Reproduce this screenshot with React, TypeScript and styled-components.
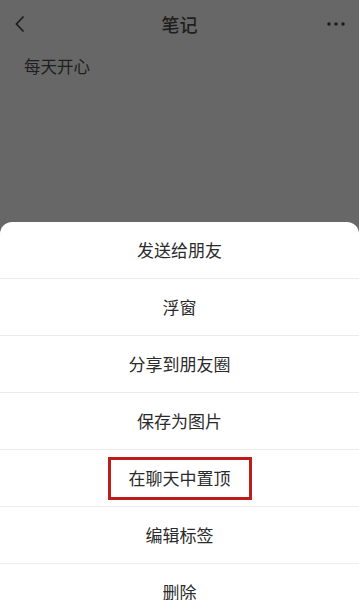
import React from "react";
import styled, { createGlobalStyle } from "styled-components";

const GlobalStyle = createGlobalStyle`
  html, body {
    margin: 0;
    padding: 0;
    background: #676767;
  }
  body {
    font-family: "Noto Sans CJK SC", "Noto Sans", sans-serif;
  }
`;

const Screen = styled.div`
  width: 359px;
  height: 600px;
  overflow: hidden;
  display: flex;
  flex-direction: column;
  background: #676767;
`;

const Backdrop = styled.div`
  height: 222px;
  flex-shrink: 0;
  display: flex;
  flex-direction: column;
`;

const TopBar = styled.div`
  height: 48px;
  display: grid;
  grid-template-columns: 48px 1fr 48px;
  align-items: center;
`;

const IconBox = styled.div<{ $align?: string }>`
  display: flex;
  justify-content: ${(p) => p.$align || "flex-start"};
  align-items: center;
  padding: 0 14px;
`;

const Title = styled.div`
  text-align: center;
  font-size: 18px;
  font-weight: 500;
  color: #1f1f1f;
`;

const NoteText = styled.div`
  padding: 6px 24px 0;
  font-size: 16.5px;
  color: #1f1f1f;
`;

const Sheet = styled.div`
  background: #fff;
  border-radius: 12px 12px 0 0;
  display: flex;
  flex-direction: column;
`;

const Row = styled.div`
  height: 56px;
  display: flex;
  align-items: center;
  justify-content: center;
  border-bottom: 1px solid #ececec;
  &:last-child {
    border-bottom: none;
  }
`;

const Label = styled.span<{ $marked?: boolean }>`
  font-size: 17px;
  line-height: 24px;
  color: #2b2b2b;
  padding: ${(p) => (p.$marked ? "6px 18px 7px" : "0")};
  border: ${(p) => (p.$marked ? "3px solid #bd1d1a" : "none")};
`;

const items = [
  "发送给朋友",
  "浮窗",
  "分享到朋友圈",
  "保存为图片",
  "在聊天中置顶",
  "编辑标签",
  "删除",
];

const App = () => {
  return (
    <>
      <GlobalStyle />
      <Screen>
        <Backdrop>
          <TopBar>
            <IconBox>
              <svg width="12" height="18" viewBox="0 0 12 18">
                <path
                  d="M9.5 1.5 L2.5 9 L9.5 16.5"
                  fill="none"
                  stroke="#1f1f1f"
                  strokeWidth="1.8"
                />
              </svg>
            </IconBox>
            <Title>笔记</Title>
            <IconBox $align="flex-end">
              <svg width="18" height="4" viewBox="0 0 18 4">
                <circle cx="2" cy="2" r="1.8" fill="#1f1f1f" />
                <circle cx="9" cy="2" r="1.8" fill="#1f1f1f" />
                <circle cx="16" cy="2" r="1.8" fill="#1f1f1f" />
              </svg>
            </IconBox>
          </TopBar>
          <NoteText>每天开心</NoteText>
        </Backdrop>
        <Sheet>
          {items.map((item) => (
            <Row key={item}>
              <Label $marked={item === "在聊天中置顶"}>{item}</Label>
            </Row>
          ))}
        </Sheet>
      </Screen>
    </>
  );
};

export default App;
